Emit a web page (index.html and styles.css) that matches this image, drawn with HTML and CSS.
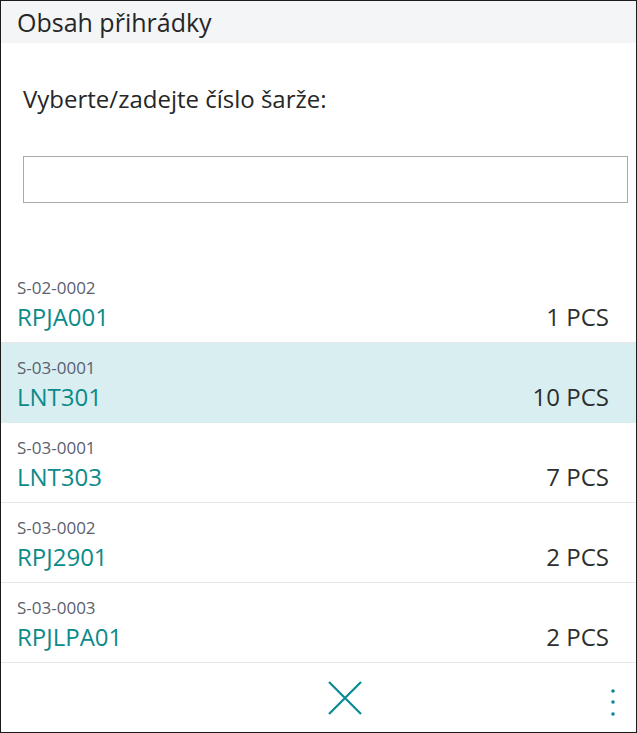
FILE: index.html
```html
<!DOCTYPE html>
<html lang="cs">
<head>
<meta charset="utf-8">
<title>Obsah přihrádky</title>
<link rel="stylesheet" href="styles.css">
</head>
<body>
<div class="frame">
  <header class="title-bar">Obsah přihrádky</header>
  <section class="prompt">
    <label class="prompt-label" for="lot">Vyberte/zadejte číslo šarže:</label>
    <input class="prompt-input" id="lot" type="text">
  </section>
  <ul class="lots">
    <li class="lot">
      <div class="lot-info"><span class="lot-bin">S-02-0002</span><span class="lot-no">RPJA001</span></div>
      <span class="lot-qty">1 PCS</span>
    </li>
    <li class="lot selected">
      <div class="lot-info"><span class="lot-bin">S-03-0001</span><span class="lot-no">LNT301</span></div>
      <span class="lot-qty">10 PCS</span>
    </li>
    <li class="lot">
      <div class="lot-info"><span class="lot-bin">S-03-0001</span><span class="lot-no">LNT303</span></div>
      <span class="lot-qty">7 PCS</span>
    </li>
    <li class="lot">
      <div class="lot-info"><span class="lot-bin">S-03-0002</span><span class="lot-no">RPJ2901</span></div>
      <span class="lot-qty">2 PCS</span>
    </li>
    <li class="lot">
      <div class="lot-info"><span class="lot-bin">S-03-0003</span><span class="lot-no">RPJLPA01</span></div>
      <span class="lot-qty">2 PCS</span>
    </li>
  </ul>
  <footer class="actions">
    <button class="close-btn" aria-label="Zavřít">
      <svg width="34" height="34" viewBox="0 0 34 34"><path d="M1 1L33 33M33 1L1 33" stroke="#0a8a93" stroke-width="2.2" fill="none"/></svg>
    </button>
    <button class="more-btn" aria-label="Další">
      <svg width="6" height="28" viewBox="0 0 6 28"><circle cx="3" cy="3" r="1.8" fill="#0a8a93"/><circle cx="3" cy="14" r="1.8" fill="#0a8a93"/><circle cx="3" cy="26" r="1.8" fill="#0a8a93"/></svg>
    </button>
  </footer>
</div>
</body>
</html>
```
FILE: styles.css
```css
* { box-sizing: border-box; }
html, body { margin: 0; padding: 0; background: #fff; }
body { font-family: "Open Sans", "Noto Sans", sans-serif; color: #262626; }
.frame {
  width: 637px;
  height: 733px;
  border: 1px solid #1b1b1b;
  display: flex;
  flex-direction: column;
  overflow: hidden;
}
.title-bar {
  height: 42px;
  background: #f4f5f7;
  padding-left: 16px;
  font-size: 25px;
  line-height: 42px;
  color: #262626;
  flex-shrink: 0;
}
.prompt {
  padding: 40px 8px 0 22px;
  display: flex;
  flex-direction: column;
  flex-shrink: 0;
}
.prompt-label {
  font-size: 24px;
  line-height: 32px;
  color: #262626;
}
.prompt-input {
  margin-top: 41px;
  height: 47px;
  width: 100%;
  border: 1px solid #aaaaaa;
  border-radius: 0;
  outline: none;
  font: inherit;
}
.lots {
  list-style: none;
  margin: 60px 0 0 0;
  padding: 0;
  flex-shrink: 0;
}
.lot {
  height: 80px;
  border-bottom: 1px solid #e6e6e6;
  display: flex;
  justify-content: space-between;
  align-items: flex-end;
  padding: 0 27px 9px 16px;
}
.lot.selected { background: #d8eef1; border-bottom-color: #d8eef1; }
.lot-info { display: flex; flex-direction: column; }
.lot-bin {
  font-size: 17px;
  line-height: 20px;
  color: #5a6170;
}
.lot-no {
  margin-top: 3px;
  font-size: 24px;
  line-height: 32px;
  color: #0b8a8a;
}
.lot-qty {
  font-size: 24px;
  line-height: 32px;
  color: #2e2e2e;
}
.actions {
  flex: 1;
  display: flex;
  align-items: center;
  padding-left: 327px;
  padding-right: 20px;
  justify-content: space-between;
}
.close-btn, .more-btn {
  background: none;
  border: 0;
  padding: 0;
  display: flex;
  cursor: pointer;
}
.more-btn { margin-top: 8px; }
```
